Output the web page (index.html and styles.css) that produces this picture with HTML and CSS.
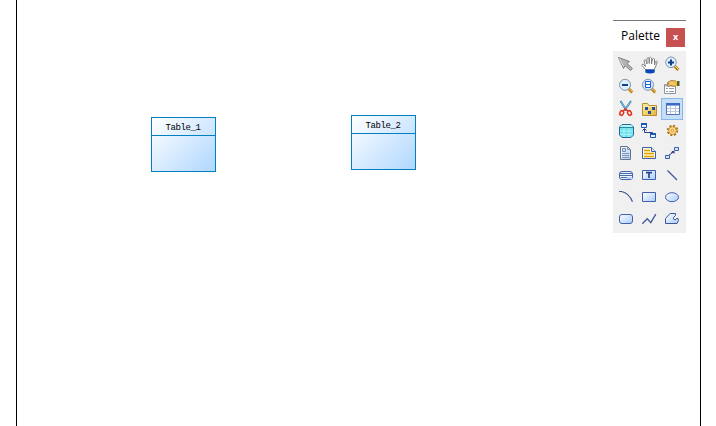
FILE: index.html
```html
<!DOCTYPE html>
<html lang="en">
<head>
<meta charset="utf-8">
<title>Diagram</title>
<link rel="stylesheet" href="styles.css">
</head>
<body>
<main class="page">
  <section class="entity entity-one"><h2>Table_1</h2></section>
  <section class="entity entity-two"><h2>Table_2</h2></section>
</main>
<aside class="palette">
  <header class="palette-head"><span class="palette-title">Palette</span><button class="close">x</button></header>
  <div class="tools">
    <div class="tool"><svg viewBox="0 0 16 16"><defs><linearGradient id="blue" x1="0" y1="0" x2="1" y2="1"><stop stop-color="#fff"/><stop offset="1" stop-color="#a9cbfa"/></linearGradient><linearGradient id="gold" x1="0" y1="0" x2="1" y2="1"><stop stop-color="#fff0a0"/><stop offset="1" stop-color="#e5b535"/></linearGradient></defs><path d="M.5 .5L11.500 4.500 9 6.500l5.500 5-2 2L7 8.500 5.500 11.500z" fill="#b4b4b4" stroke="#808080"/><path d="M1.500 1.500l4 8" stroke="#ddd"/></svg></div>
    <div class="tool"><svg viewBox="0 0 16 16"><path d="M4.500 12.500L1 8.500Q.8 6.500 2.500 7.500l2 2L3 3.500Q4 2 5 3.500L6 7V1.500q1-2 2.200 0v5V1q1.200-1.500 2.300 0V7l1-5q1-1.200 2 0V8l1-3.500q1.200-1 1.800 0L14.500 10l-1.500 3z" fill="#fff" stroke="#777" stroke-width=".9"/><path d="M4.300 12.500h9.400v3q-4.700 2-9.400 0z" fill="#0848b8"/></svg></div>
    <div class="tool"><svg viewBox="0 0 16 16"><path d="M10.300 8.800l4 4.200" stroke="#b77b12" stroke-width="3"/><path d="M10.500 8.500l4 4" stroke="#ffd36a"/><circle cx="7" cy="5.300" r="5.300" fill="#dceeff" stroke="#8495aa"/><path d="M4 5.500h6M7 2.500v6" stroke="#133f87" stroke-width="2"/></svg></div>

    <div class="tool"><svg viewBox="0 0 16 16"><path d="M10.300 9.300l4 4.200" stroke="#b77b12" stroke-width="3"/><path d="M10.500 9l4 4" stroke="#ffd36a"/><circle cx="7" cy="5.800" r="5.500" fill="#dceeff" stroke="#8495aa"/><path d="M4 6h6" stroke="#133f87" stroke-width="2"/></svg></div>
    <div class="tool"><svg viewBox="0 0 16 16"><path d="M10.300 9.300l4 4.200" stroke="#b77b12" stroke-width="3"/><path d="M10.500 9l4 4" stroke="#ffd36a"/><circle cx="7" cy="5.800" r="5.500" fill="#d4e7ff" stroke="#8495aa"/><path d="M4.500 2.500h5v6h-5zM4.500 5.500h5" fill="#fff" stroke="#1b61db"/></svg></div>
    <div class="tool"><svg viewBox="0 0 16 16"><path d="M.5 5.500h11v9H.5z" fill="#fff" stroke="#8a929e"/><path d="M1 6.500h10" stroke="#a4b9d5" stroke-width="2"/><path d="M2 9.500h2M2 12.500h2M5 9.500h5M5 12.500h5" stroke="#8c9bad"/><path d="M3 4l4-2.500 5 .5v4l-2 1.500-3-1-3 1-1-1.500 2-1.500z" fill="#f3c66d" stroke="#9b6815" stroke-width=".8"/><path d="M11 2h2v5h-2z" fill="#eac026"/><path d="M13 2h2.500v5H13z" fill="#52623d"/></svg></div>

    <div class="tool"><svg viewBox="0 0 16 16"><path d="M2.500 0l6 9.500M13 0L6.500 9.500" stroke="#397eac" stroke-width="2"/><path d="M3 .5l5 8M12.500 .5l-5 8" stroke="#a8d8f0" stroke-width=".7"/><ellipse cx="3.700" cy="12" rx="1.800" ry="2.400" transform="rotate(25 3.700 12)" stroke="#e5301b" stroke-width="1.500"/><ellipse cx="11.500" cy="12" rx="1.800" ry="2.400" transform="rotate(-25 11.500 12)" stroke="#e5301b" stroke-width="1.500"/><path d="M5 10l2.500-2 2.500 2" stroke="#e5301b" stroke-width="1.400"/></svg></div>
    <div class="tool"><svg viewBox="0 0 16 16"><path d="M1.500 14.500v-12h5l1.500 2h7.500v10z" fill="url(#gold)" stroke="#b58c30"/><path d="M2 5.500h13" stroke="#fff0a8"/><path d="M4 6h3v3H4zM11 6h3v3h-3zM7 10h3v3H7z" fill="#214eac"/></svg></div>
    <div class="tool selected"><svg viewBox="0 0 16 16"><path d="M2.500 2.500h13v11h-13z" fill="#fff" stroke="#5672ae"/><path d="M2 3h14" stroke="#3c6ac0" stroke-width="2"/><path d="M3 4.500h12" stroke="#86acec"/><path d="M3 7.500h12M3 10.500h12M6.500 5v8M11.500 5v8" stroke="#bccbe2"/></svg></div>

    <div class="tool"><svg viewBox="0 0 16 16"><path d="M1.500 4L4 1.500h9L15.500 4v8L13 14.500H4L1.500 12z" fill="#70e2ed" stroke="#236b99"/><path d="M2 4l2-2h9l2 2z" fill="#b8f5fa"/><path d="M2 4.500h13" stroke="#238ba6"/><path d="M2 8h13M2 11.500h13M6 5v9M11 5v9" stroke="#b8f5fa" stroke-width=".8"/></svg></div>
    <div class="tool"><svg viewBox="0 0 16 16"><path d="M.5 .5h5v4h-5zM9.500 10.500h5v4h-5z" fill="#eaf5ff" stroke="#1b59b5"/><path d="M0 1h6M9 11h6" stroke="#1b59b5" stroke-width="2"/><path d="M3.500 6v3.500h8V11M1.500 7.500l2-2 2 2" stroke="#263e86"/></svg></div>
    <div class="tool"><svg viewBox="0 0 16 16"><circle cx="8.500" cy="7.500" r="4.700" stroke="#a66b19" stroke-width="2" stroke-dasharray="2 1.690"/><circle cx="8.500" cy="7.500" r="3.800" fill="#ffdc82" stroke="#d49330"/><circle cx="8.500" cy="7.500" r="1.200" fill="#fff4cf" stroke="#b67a24" stroke-width=".8"/></svg></div>

    <div class="tool"><svg viewBox="0 0 16 16"><path d="M2.500 1.500h7l3 3v10h-10z" fill="url(#blue)" stroke="#64748c"/><path d="M9.500 1.500v3h3M4 8.500h7M4 10.500h7M4 12.500h7" stroke="#8194ac"/><path d="M4.500 3.500h3v3h-3z" fill="#d3e4f7" stroke="#758bad"/></svg></div>
    <div class="tool"><svg viewBox="0 0 16 16"><path d="M1.500 2.500h9l4 4v7h-13z" fill="#fff7cb" stroke="#405faf"/><path d="M10.500 2.500v4h4" fill="#dae6fa" stroke="#405faf"/><path d="M3 5.500h6M3 8.500h10M3 11.500h10" stroke="#e0a000" stroke-width="1.300"/></svg></div>
    <div class="tool"><svg viewBox="0 0 16 16"><path d="M1.500 10.500h4v3h-4zM10.500 2.500h4v3h-4z" fill="url(#blue)" stroke="#3c5fa8"/><path d="M5.500 10l1-1M7 8.500l2.500-2" stroke="#263d80" stroke-width="1.200"/><path d="M7.500 6h3v3z" fill="#263d80"/></svg></div>

    <div class="tool"><svg viewBox="0 0 16 16"><rect x="1.500" y="4.500" width="13" height="8" rx="2.500" fill="#edf5ff" stroke="#405faf"/><path d="M2 6.500h12M2 8.500h12M3 10.500h11" stroke="#4b68a8"/><path d="M9 10h5v2H9z" fill="#b7d4fa"/></svg></div>
    <div class="tool"><svg viewBox="0 0 16 16"><path d="M1.500 3.500h13v9h-13z" fill="url(#blue)" stroke="#405faf"/><path d="M5 5.700h6M8 5v6" stroke="#26468e" stroke-width="1.700"/></svg></div>
    <div class="tool"><svg viewBox="0 0 16 16"><path d="M3.500 3.500l9.500 9.500" stroke="#405699" stroke-width="1.200"/></svg></div>

    <div class="tool"><svg viewBox="0 0 16 16"><path d="M1 2.500h2.500Q11 4 14.500 12.800" stroke="#405699" stroke-width="1.200"/></svg></div>
    <div class="tool"><svg viewBox="0 0 16 16"><path d="M1.500 3.500h13v9h-13z" fill="url(#blue)" stroke="#405faf"/></svg></div>
    <div class="tool"><svg viewBox="0 0 16 16"><ellipse cx="8" cy="8.200" rx="6.500" ry="4.500" fill="url(#blue)" stroke="#405faf"/></svg></div>

    <div class="tool"><svg viewBox="0 0 16 16"><rect x="1.500" y="3.500" width="13" height="9" rx="2.500" fill="url(#blue)" stroke="#405faf"/></svg></div>
    <div class="tool"><svg viewBox="0 0 16 16"><path d="M1.300 12.700l5-5 3.500 4 5-8.500" stroke="#405699" stroke-width="1.300"/></svg></div>
    <div class="tool"><svg viewBox="0 0 16 16"><path d="M1.500 12.500v-5l4.500-5h5.500v2L9.500 6.500v1.500l1.500 1 1.500-1.500h1.500l.5 2-1.500 3z" fill="url(#blue)" stroke="#405699" stroke-linejoin="round"/></svg></div>
  </div>
</aside>
</body>
</html>
```
FILE: styles.css
```css
* { box-sizing: border-box; }
body { margin: 0; width: 716px; height: 426px; overflow: hidden; background: #fff; }
.page { width: 685px; height: 426px; margin-left: 16px; border: solid #000; border-width: 0 1px; }
.entity {
  position: absolute;
  width: 65px;
  height: 55px;
  border: 1px solid #0080c0;
  background: linear-gradient(135deg, #fff, #b4d9ff 95%);
}
.entity-one { left: 151px; top: 117px; }
.entity-two { left: 351px; top: 115px; }
.entity h2 {
  height: 18px;
  margin: 0;
  padding: 1px 1px 0 0;
  border-bottom: 1px solid #0080c0;
  font: 9px/18px "Liberation Mono", monospace;
  letter-spacing: -.4px;
  text-align: center;
  color: #000;
}
.palette { position: absolute; left: 613px; top: 20px; width: 73px; height: 213px; border-top: 1px solid #777; }
.palette-head { display: flex; justify-content: space-between; height: 30px; padding: 7px 1px 4px 8px; background: #fff; }
.palette-title { margin-top: -1px; font: 12px/17px "Open Sans", sans-serif; color: #000; }
.close { width: 19px; height: 19px; padding: 0 0 2px; border: 0; background: #c75050; color: #fff; font: bold 9px/16px "Open Sans", sans-serif; }
.tools { display: grid; grid-template-columns: repeat(3, 23px); grid-auto-rows: 22px; height: 182px; padding: 3px 0 0 1px; background: #f0f0f0; }
.tool { padding: 3px 0 0 4px; }
.tool svg { display: block; width: 16px; height: 16px; overflow: visible; fill: none; }
.selected { margin-left: 1px; padding: 2px 0 0 2px; border: 1px solid #88b8e3; background: #c5dff8; }
```
